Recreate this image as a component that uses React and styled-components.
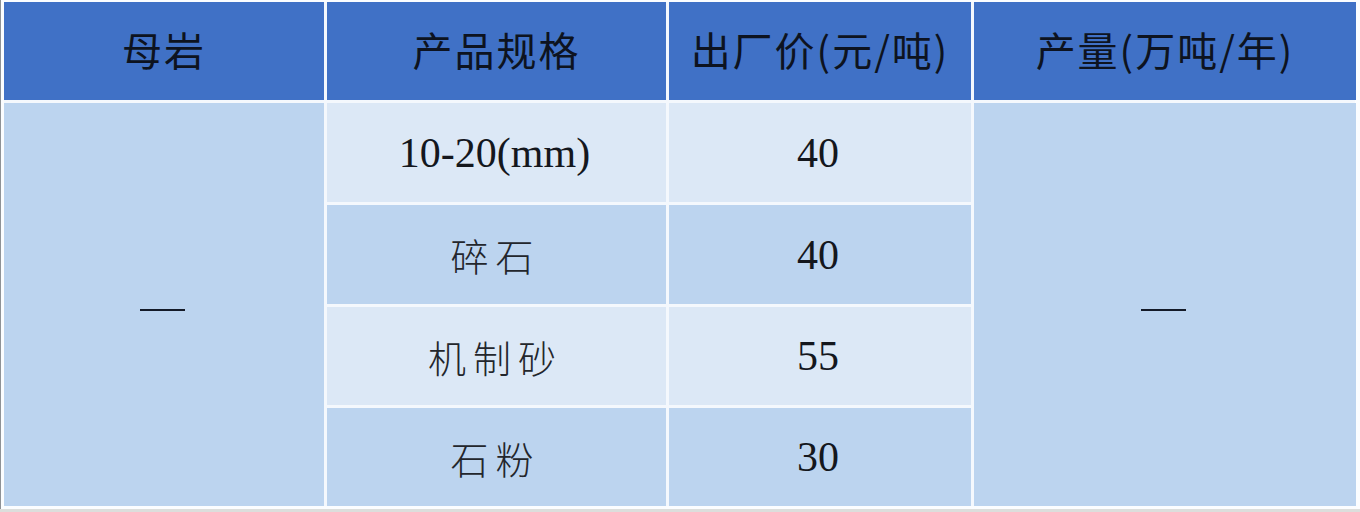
import React from 'react';
import styled, { createGlobalStyle } from 'styled-components';

const GlobalStyle = createGlobalStyle`
  html, body {
    margin: 0;
    padding: 0;
    background: #dcdedc;
  }
`;

const Page = styled.div`
  box-sizing: border-box;
  width: 1360px;
  background: #fbfdff;
  border-left: 1px solid #8e9296;
  padding: 2px 5px 3px 3px;
`;

const Table = styled.div`
  display: grid;
  grid-template-columns: 320px 339px 302px 382px;
  grid-template-rows: 98px 99px 99px 98px 98px;
  gap: 3px;
  background: #f4f8fd;
`;

const Head = styled.div`
  display: flex;
  align-items: center;
  justify-content: center;
  padding-bottom: 5px;
  background: #4071c6;
  color: #0d1320;
  font-family: "Noto Sans CJK SC", "Noto Sans", sans-serif;
  font-size: 40px;
  font-weight: 400;
  letter-spacing: 2px;
`;

const Cell = styled.div`
  display: flex;
  align-items: center;
  justify-content: center;
  background: ${({ light }) => (light ? '#dce8f6' : '#bcd4ef')};
  color: #14171d;
  grid-row: ${({ span }) => (span ? `2 / span ${span}` : 'auto')};
  grid-column: ${({ col }) => col || 'auto'};
`;

const Num = styled.span`
  font-family: "Liberation Serif", "Times New Roman", serif;
  font-size: 42px;
  margin-right: 4px;
`;

const Han = styled.span`
  font-family: "Noto Sans CJK SC", sans-serif;
  font-size: 38px;
  font-weight: 300;
  letter-spacing: 7px;
  margin-right: 2px;
  color: #23262c;
`;

const Dash = styled.span`
  display: block;
  width: 45px;
  height: 2px;
  background: #141a28;
  margin: 10px 4px 0 0;
`;

const rows = [
  { spec: '10-20(mm)', latin: true, price: '40', light: true },
  { spec: '碎石', price: '40' },
  { spec: '机制砂', price: '55', light: true },
  { spec: '石粉', price: '30' },
];

export default function App() {
  return (
    <>
      <GlobalStyle />
      <Page>
        <Table>
          <Head>母岩</Head>
          <Head>产品规格</Head>
          <Head>出厂价(元/吨)</Head>
          <Head>产量(万吨/年)</Head>

          <Cell span={4} col="1">
            <Dash />
          </Cell>
          {rows.map((r, i) => (
            <React.Fragment key={i}>
              <Cell light={r.light} col="2">
                {r.latin ? <Num>{r.spec}</Num> : <Han>{r.spec}</Han>}
              </Cell>
              <Cell light={r.light} col="3">
                <Num>{r.price}</Num>
              </Cell>
            </React.Fragment>
          ))}
          <Cell span={4} col="4">
            <Dash />
          </Cell>
        </Table>
      </Page>
    </>
  );
}
